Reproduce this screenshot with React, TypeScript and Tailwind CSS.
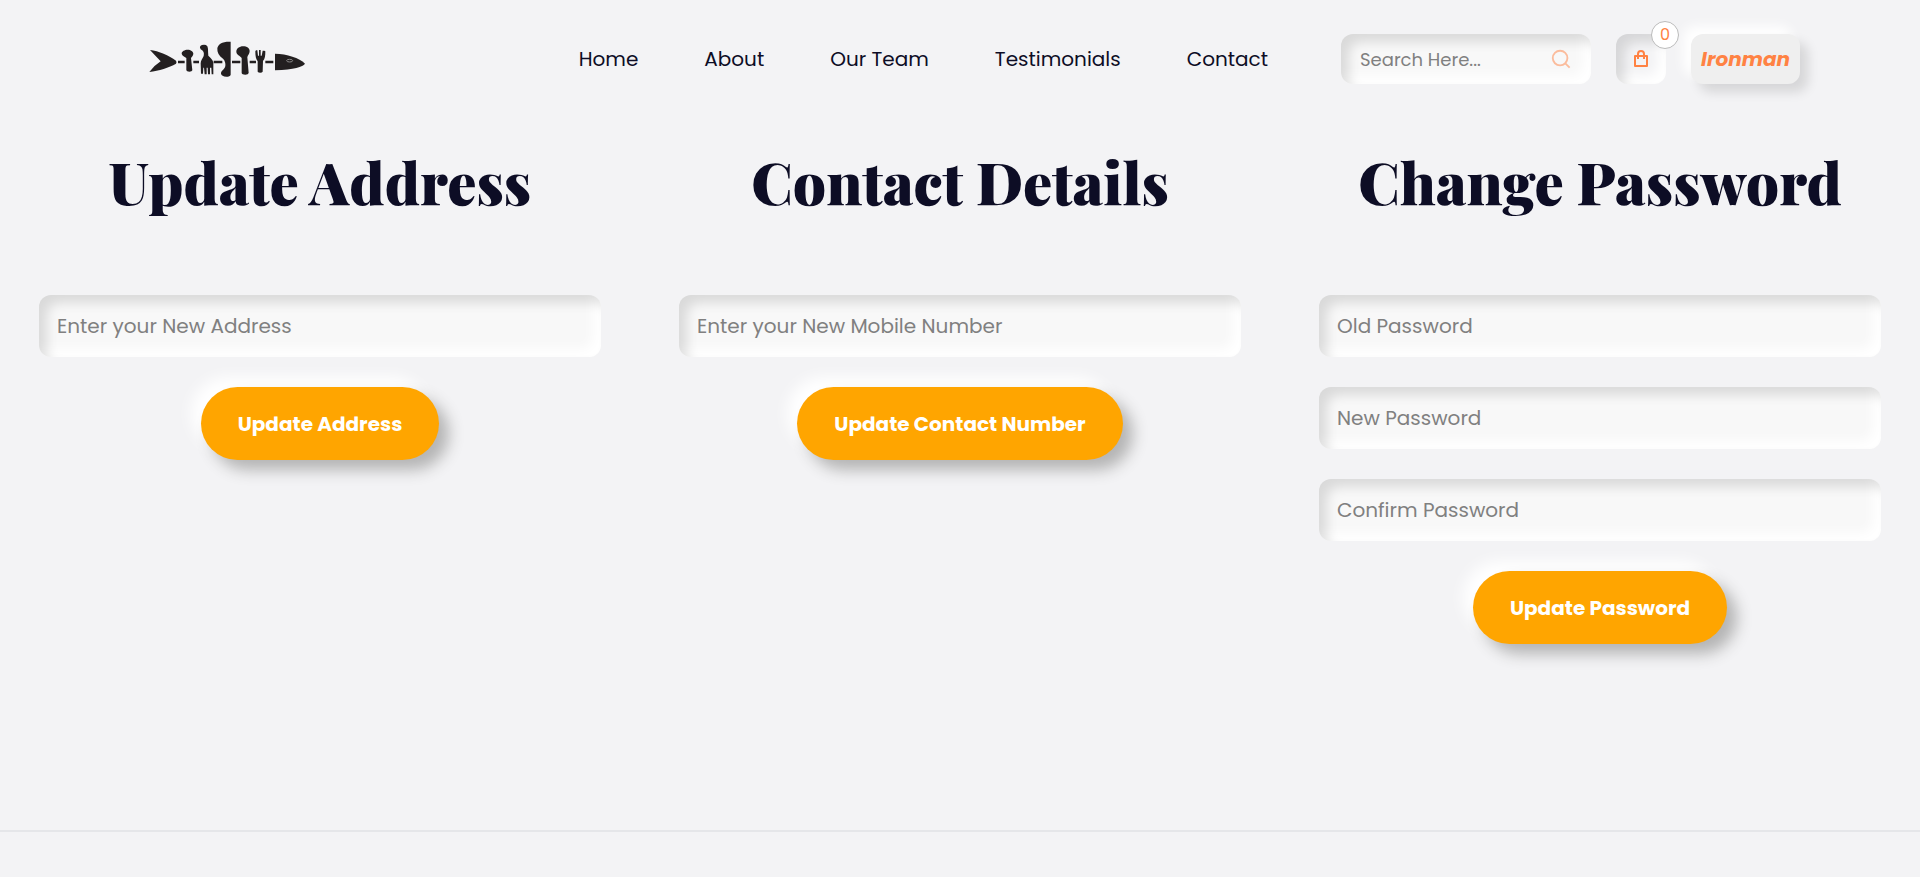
import { FormEvent } from "react";

const NAV_LINKS = ["Home", "About", "Our Team", "Testimonials", "Contact"];

type Field = { id: string; placeholder: string; type: string };
type Section = { title: string; action: string; fields: Field[] };

const SECTIONS: Section[] = [
  {
    title: "Update Address",
    action: "Update Address",
    fields: [{ id: "address", placeholder: "Enter your New Address", type: "text" }],
  },
  {
    title: "Contact Details",
    action: "Update Contact Number",
    fields: [{ id: "mobile", placeholder: "Enter your New Mobile Number", type: "tel" }],
  },
  {
    title: "Change Password",
    action: "Update Password",
    fields: [
      { id: "old-password", placeholder: "Old Password", type: "password" },
      { id: "new-password", placeholder: "New Password", type: "password" },
      { id: "confirm-password", placeholder: "Confirm Password", type: "password" },
    ],
  },
];

function FishLogo() {
  return (
    <svg viewBox="50 57 480 120" className="h-10 w-40" fill="#231f20" aria-hidden="true">
      {/* spine */}
      <path d="M143 122h20v8h-20zM189 122h17v8h-17zM250 122h26v8h-26zM305 122h25v8h-25zM358 122h19v8h-19zM405 122h24v8h-24z" />
      {/* tail */}
      <path d="M59 90C85 93 116 106 137 122Q140 126 137 131C116 143 86 152 57 156Q72 136 91 124Q76 108 59 90Z" />
      {/* small spoon */}
      <path d="M172 89C181 89 189 94 189 101C189 107 184 110 182 114L186 151Q185 155 177 155Q169 155 168 151L168 114C162 110 154 107 154 100C154 94 163 89 172 89Z" />
      {/* fork, tines down */}
      <path d="M210 78Q216 73 227 75Q233 78 233 87Q233 97 234 107C240 113 248 119 249 128L249 163H244L243 143H239V163H233L232 143H229V163H223L221 143H219L218 161H212L211 130C211 121 217 116 220 108C222 99 220 93 211 88Q207 82 210 78Z" />
      {/* knife */}
      <path d="M301 65V164Q299 170 288 170Q274 169 272 161C272 151 283 149 285 138C286 130 284 122 278 116C266 108 260 98 261 85C263 72 276 64 301 65Z" />
      {/* large spoon */}
      <path d="M338 79C350 79 358 85 358 93C358 102 352 105 351 112L355 159Q354 164 345 164Q335 164 334 159L334 114C329 107 318 104 318 95C318 86 327 79 338 79Z" />
      {/* small fork, tines up */}
      <path d="M377 91H381L383 107H386V90H391V107H394L397 92H402L405 94C405 108 404 117 398 123L397 155Q395 158 390 158Q384 158 382 155L382 124C377 118 375 109 375 94Z" />
      {/* head */}
      <path d="M434 101C470 102 507 113 524 131C517 141 492 148 434 151Z" />
      <ellipse cx="478" cy="122" rx="9" ry="4" fill="none" stroke="#8b8989" strokeWidth="3" />
    </svg>
  );
}

function SearchIcon() {
  return (
    <svg viewBox="0 0 24 24" className="size-[22px]" fill="none" stroke="#ff8243" strokeWidth="2" aria-hidden="true">
      <circle cx="11" cy="11" r="8" />
      <path d="m16.7 16.7 4.7 4.7" />
    </svg>
  );
}

function BagIcon() {
  return (
    <svg viewBox="0 0 20 20" className="size-5" fill="none" stroke="#ff8243" strokeWidth="2" strokeLinejoin="round" aria-hidden="true">
      <path d="M4 7h12v10H4zM7 10V5a3 3 0 0 1 6 0V10" />
    </svg>
  );
}

function Header() {
  return (
    <header className="flex items-center justify-between pt-[34px] pr-[120px] pl-[147px]">
      <a href="#home" aria-label="Home page">
        <FishLogo />
      </a>
      <div className="flex items-center gap-[73px]">
        <nav className="flex gap-[66px]">
          {NAV_LINKS.map((link) => (
            <a key={link} href="#" className="text-[20px] leading-[30px] whitespace-nowrap text-[#0d0d25]">
              {link}
            </a>
          ))}
        </nav>
        <div className="flex items-center gap-[25px]">
          <form
            role="search"
            onSubmit={(e: FormEvent) => e.preventDefault()}
            className="flex h-[50px] w-[250px] items-center rounded-xl bg-[#f8f8f8] px-[19px] shadow-[inset_8px_8px_12px_rgba(0,0,0,0.12),inset_-8px_-8px_12px_#ffffff]"
          >
            <input
              type="search"
              aria-label="Search"
              placeholder="Search Here..."
              className="min-w-0 flex-1 bg-transparent text-[18px] outline-none placeholder:text-[#808080]"
            />
            <button type="submit" aria-label="Submit search" className="opacity-50">
              <SearchIcon />
            </button>
          </form>
          <button
            type="button"
            aria-label="Cart"
            className="relative flex size-[50px] items-center justify-center rounded-xl bg-[#f3f3f5] shadow-[inset_8px_8px_12px_rgba(0,0,0,0.12),inset_-8px_-8px_12px_#ffffff]"
          >
            <BagIcon />
            <span className="absolute -top-[13px] -right-[13px] flex size-7 items-center justify-center rounded-full border border-[#bbbbbb] bg-white text-[16px] text-[#ff8243]">
              0
            </span>
          </button>
          <button
            type="button"
            className="h-[50px] w-[109px] rounded-xl bg-[#efefef] text-[20px] font-bold text-[#ff8243] italic shadow-[8px_8px_12px_rgba(0,0,0,0.12),-8px_-8px_12px_#ffffff]"
          >
            Ironman
          </button>
        </div>
      </div>
    </header>
  );
}

function UpdateForm({ title, action, fields }: Section) {
  return (
    <section className="flex flex-col items-center px-[39px]">
      <h2 className="font-['Playfair_Display','Liberation_Serif',serif] text-[58px] leading-[74px] font-black whitespace-nowrap text-[#0d0d25]">
        {title}
      </h2>
      <form
        onSubmit={(e: FormEvent) => e.preventDefault()}
        className="mt-[77px] flex w-full flex-col items-center gap-[30px]"
      >
        {fields.map((field) => (
          <input
            key={field.id}
            id={field.id}
            type={field.type}
            aria-label={field.placeholder}
            placeholder={field.placeholder}
            className="h-[62px] w-full rounded-xl bg-[#f8f8f8] px-[18px] text-[20px] shadow-[inset_8px_8px_12px_rgba(0,0,0,0.12),inset_-8px_-8px_12px_#ffffff] outline-none placeholder:text-[#808080]"
          />
        ))}
        <button
          type="submit"
          className="h-[73px] rounded-full bg-[#ffa500] px-[37px] text-[20px] font-bold whitespace-nowrap text-white shadow-[10px_10px_15px_#b4b4b4,-10px_-10px_15px_#ffffff]"
        >
          {action}
        </button>
      </form>
    </section>
  );
}

export default function App() {
  return (
    <div className="min-h-screen bg-[#f3f3f5] font-['Poppins','Inter',sans-serif]">
      <Header />
      <main className="grid grid-cols-3 pt-[60px]">
        {SECTIONS.map((section) => (
          <UpdateForm key={section.title} {...section} />
        ))}
      </main>
      <footer className="mt-[186px] border-t-2 border-[#e5e6e9]" />
    </div>
  );
}
